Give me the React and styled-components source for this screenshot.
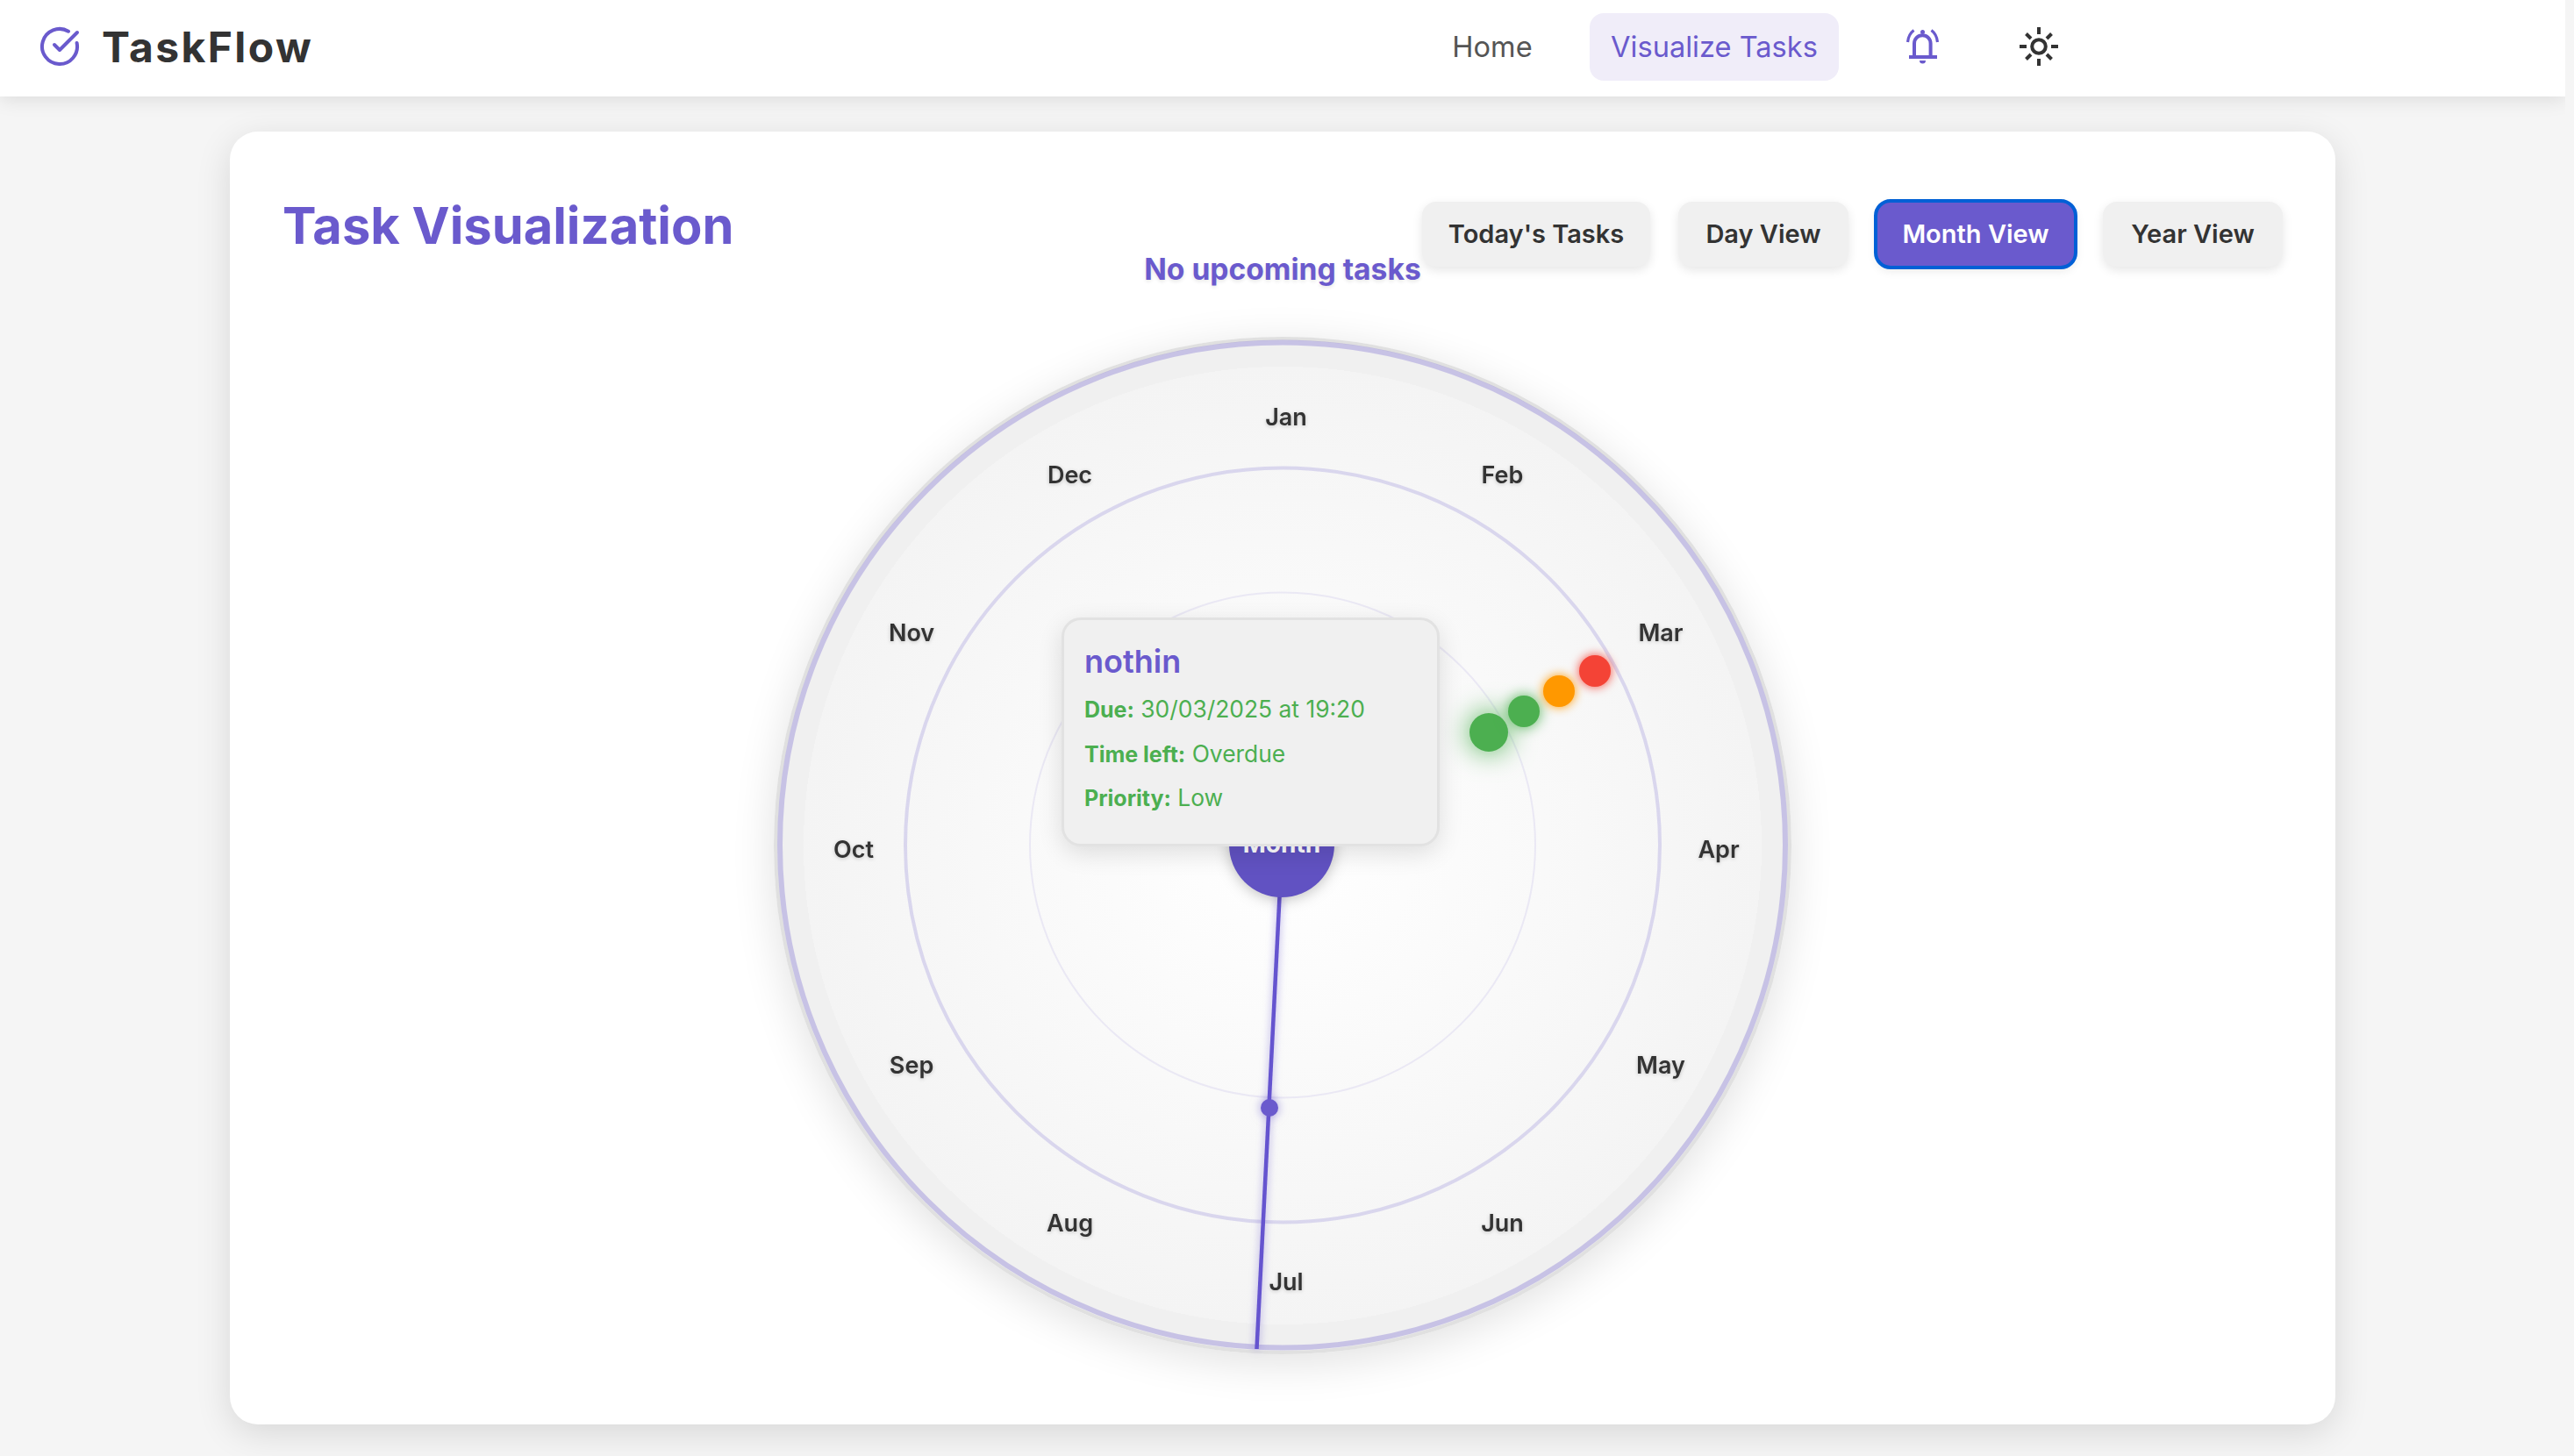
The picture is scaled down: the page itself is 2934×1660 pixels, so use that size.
import React from "react";
import styled, { createGlobalStyle } from "styled-components";
import { CircleCheckBig } from "lucide-react";

const Global = createGlobalStyle`
  html, body { margin: 0; padding: 0; background: #f5f5f5; overflow: hidden; }
  body { font-family: Inter, "Noto Sans", sans-serif; color: #333; }
  * { box-sizing: border-box; }
`;

const Page = styled.div`
  width: 2924px;
  height: 1660px;
  overflow: hidden;
  background: #f5f5f5;
`;

const Navbar = styled.header`
  height: 110px;
  display: flex;
  align-items: center;
  justify-content: space-between;
  padding: 0 578px 4px 44px;
  background: #fff;
  box-shadow: 0 4px 20px rgba(0, 0, 0, 0.1);
`;

const Brand = styled.div`
  display: flex;
  align-items: center;
  gap: 24px;
  color: #6a5acd;
`;

const BrandName = styled.span`
  font-size: 48px;
  font-weight: 700;
  letter-spacing: 2.4px;
  color: #333;
`;

const NavGroup = styled.nav`
  display: flex;
  align-items: center;
  gap: 38px;
`;

const NavLink = styled.a`
  width: ${(p) => p.$w}px;
  height: 77px;
  display: flex;
  align-items: center;
  justify-content: center;
  border-radius: 16px;
  font-size: 32.6px;
  font-weight: 400;
  color: ${(p) => (p.$active ? "#6a5acd" : "#555")};
  background: ${(p) => (p.$active ? "#f0edf9" : "transparent")};
`;

const IconGroup = styled.div`
  display: flex;
  align-items: center;
  gap: 90px;
  margin-left: 38px;
`;

const Icon = styled.svg`
  display: block;
  width: ${(p) => p.$size}px;
  height: ${(p) => p.$size}px;
`;

const Card = styled.main`
  width: 2400px;
  margin: 40px auto 0;
  padding: 60px 60px 80px;
  background: #fff;
  border-radius: 32px;
  box-shadow: 0 10px 40px rgba(0, 0, 0, 0.12);
`;

const Header = styled.div`
  height: 78px;
  display: flex;
  justify-content: space-between;
  align-items: flex-start;
`;

const Title = styled.h1`
  margin: 0;
  padding-top: 7px;
  font-size: 57.8px;
  line-height: 80px;
  font-weight: 700;
  color: #6a5acd;
`;

const ViewButtons = styled.div`
  display: flex;
  gap: 32px;
  margin-top: 20px;
`;

const ViewButton = styled.button`
  width: ${(p) => p.$w}px;
  height: 74px;
  padding: 0 0 2px;
  border: none;
  border-radius: 16px;
  font-family: inherit;
  font-size: 29px;
  font-weight: 600;
  color: ${(p) => (p.$active ? "#fff" : "#333")};
  background: ${(p) => (p.$active ? "#6a5acd" : "#f0f0f0")};
  box-shadow: 0 4px 12px rgba(0, 0, 0, 0.1);
  outline: ${(p) => (p.$active ? "4px solid #0060d6" : "none")};
  outline-offset: -1px;
`;

const Notice = styled.p`
  margin: 0;
  height: 40px;
  font-size: 33.6px;
  line-height: 38px;
  font-weight: 700;
  text-align: center;
  color: #6a5acd;
  text-shadow: 0 2px 4px rgba(0, 0, 0, 0.1);
`;

const Dial = styled.section`
  position: relative;
  width: 1160px;
  height: 1160px;
  margin: 56px auto 0;
  border: 4px solid #e0e0e0;
  border-radius: 50%;
  background: radial-gradient(circle at center, #fff 0, #f4f4f4 546px, #f0f0f0 546px);
  box-shadow: 0 10px 50px rgba(0, 0, 0, 0.12);
`;

const DialDrawing = styled.svg`
  display: block;
  width: 1152px;
  height: 1152px;
  overflow: visible;
  font-family: Inter, "Noto Sans", sans-serif;
`;

const Ring = styled.circle`
  fill: none;
  stroke: #6a5acd;
  stroke-width: ${(p) => p.$stroke};
  stroke-opacity: ${(p) => p.$alpha};
`;

const MonthLabel = styled.text`
  font-size: 27px;
  font-weight: 600;
  fill: #333;
  text-anchor: middle;
  dominant-baseline: central;
  filter: drop-shadow(0 1px 2px rgba(0, 0, 0, 0.2));
`;

const Hand = styled.line`
  stroke: #6554cf;
  stroke-width: 4.5;
  filter: drop-shadow(0 0 5px rgba(106, 90, 205, 0.55));
`;

const HandKnob = styled.circle`
  fill: #6a5acd;
  filter: drop-shadow(0 0 6px rgba(106, 90, 205, 0.6));
`;

const Hub = styled.circle`
  fill: #6152c2;
  filter: drop-shadow(0 2px 8px rgba(0, 0, 0, 0.25));
`;

const HubLabel = styled.text`
  font-size: 28px;
  font-weight: 700;
  fill: #fff;
  text-anchor: middle;
  dominant-baseline: central;
`;

const TaskDot = styled.circle`
  fill: ${(p) => p.$color};
  filter: drop-shadow(0 0 ${(p) => p.$glow}px ${(p) => p.$color});
`;

const Tooltip = styled.aside`
  position: absolute;
  left: 324px;
  top: 316px;
  width: 431px;
  height: 261px;
  padding: 22px 23px;
  border: 3px solid #e2e2e2;
  border-radius: 22px;
  background: #f0f0f0;
  box-shadow: 0 8px 28px rgba(0, 0, 0, 0.12);
`;

const TipTitle = styled.h3`
  margin: 0 0 5px;
  font-size: 36px;
  line-height: 50px;
  font-weight: 600;
  color: #6a5acd;
`;

const TipRow = styled.p`
  margin: 0;
  font-size: 26.4px;
  line-height: 49.5px;
  font-weight: 400;
  color: #4caf50;
  white-space: nowrap;

  strong {
    font-weight: 700;
    font-size: 25px;
  }
`;

const months = ["Jan", "Feb", "Mar", "Apr", "May", "Jun", "Jul", "Aug", "Sep", "Oct", "Nov", "Dec"];

const dots = [
  { x: 811, y: 447, r: 22, color: "#4caf50", glow: 16 },
  { x: 851, y: 423, r: 18, color: "#4caf50", glow: 8 },
  { x: 891, y: 400, r: 18, color: "#ff9800", glow: 6 },
  { x: 932, y: 377, r: 18, color: "#f44336", glow: 6 },
];

const buttons = [
  { label: "Today's Tasks", w: 260 },
  { label: "Day View", w: 194 },
  { label: "Month View", w: 226, active: true },
  { label: "Year View", w: 205 },
];

const BellIcon = () => (
  <Icon $size={40} viewBox="0 0 40 40" fill="none" stroke="#6a5acd">
    <path d="M4 32H36" strokeWidth="4" />
    <path d="M10 31V16.5a9.3 9.3 0 0 1 18.6 0V31" strokeWidth="4" />
    <circle cx="19.5" cy="3.5" r="2.5" fill="#6a5acd" stroke="none" />
    <path d="M2.5 15C3 9.5 5.5 4.5 9.5 1.5M36.5 15C36 9.5 33.5 4.5 29.5 1.5" strokeWidth="3.2" />
    <path d="M16 36h7a3.5 3.5 0 0 1-7 0z" fill="#6a5acd" stroke="none" />
  </Icon>
);

const SunIcon = () => (
  <Icon $size={44} viewBox="0 0 44 44" fill="none" stroke="#333" strokeWidth="4">
    <circle cx="22" cy="22" r="7.8" />
    <path d="M22 0V8M22 36V44M0 22H8M36 22H44M7.5 7.5L13 13M31 31L36.5 36.5M36.5 7.5L31 13M13 31L7.5 36.5" />
  </Icon>
);

export default function App() {
  return (
    <Page>
      <Global />
      <Navbar>
        <Brand>
          <CircleCheckBig size={48} strokeWidth={2} />
          <BrandName>TaskFlow</BrandName>
        </Brand>
        <NavGroup>
          <NavLink $w={146}>Home</NavLink>
          <NavLink $w={284} $active>Visualize Tasks</NavLink>
          <IconGroup>
            <BellIcon />
            <SunIcon />
          </IconGroup>
        </NavGroup>
      </Navbar>
      <Card>
        <Header>
          <Title>Task Visualization</Title>
          <ViewButtons>
            {buttons.map((b) => (
              <ViewButton key={b.label} $w={b.w} $active={b.active}>{b.label}</ViewButton>
            ))}
          </ViewButtons>
        </Header>
        <Notice>No upcoming tasks</Notice>
        <Dial>
          <DialDrawing viewBox="0 0 1152 1152">
            <Ring cx="576" cy="575.5" r="573" $stroke={6} $alpha={0.3} />
            <Ring cx="576" cy="575.5" r="430" $stroke={4} $alpha={0.2} />
            <Ring cx="576" cy="575.5" r="288" $stroke={2} $alpha={0.1} />
            {months.map((m, i) => {
              const a = (i * Math.PI) / 6;
              return (
                <MonthLabel key={m} x={580 + 493 * Math.sin(a)} y={580 - 493 * Math.cos(a)}>{m}</MonthLabel>
              );
            })}
            <Hand x1="575.5" y1="575" x2="546.5" y2="1150" />
            <HandKnob cx="561" cy="875" r="10" />
            <Hub cx="575" cy="575" r="60" />
            <HubLabel x="575" y="574">Month</HubLabel>
            {dots.map((d) => (
              <TaskDot key={d.x} cx={d.x} cy={d.y} r={d.r} $color={d.color} $glow={d.glow} />
            ))}
          </DialDrawing>
          <Tooltip>
            <TipTitle>nothin</TipTitle>
            <TipRow><strong>Due:</strong> 30/03/2025 at 19:20</TipRow>
            <TipRow><strong>Time left:</strong> Overdue</TipRow>
            <TipRow><strong>Priority:</strong> Low</TipRow>
          </Tooltip>
        </Dial>
      </Card>
    </Page>
  );
}
